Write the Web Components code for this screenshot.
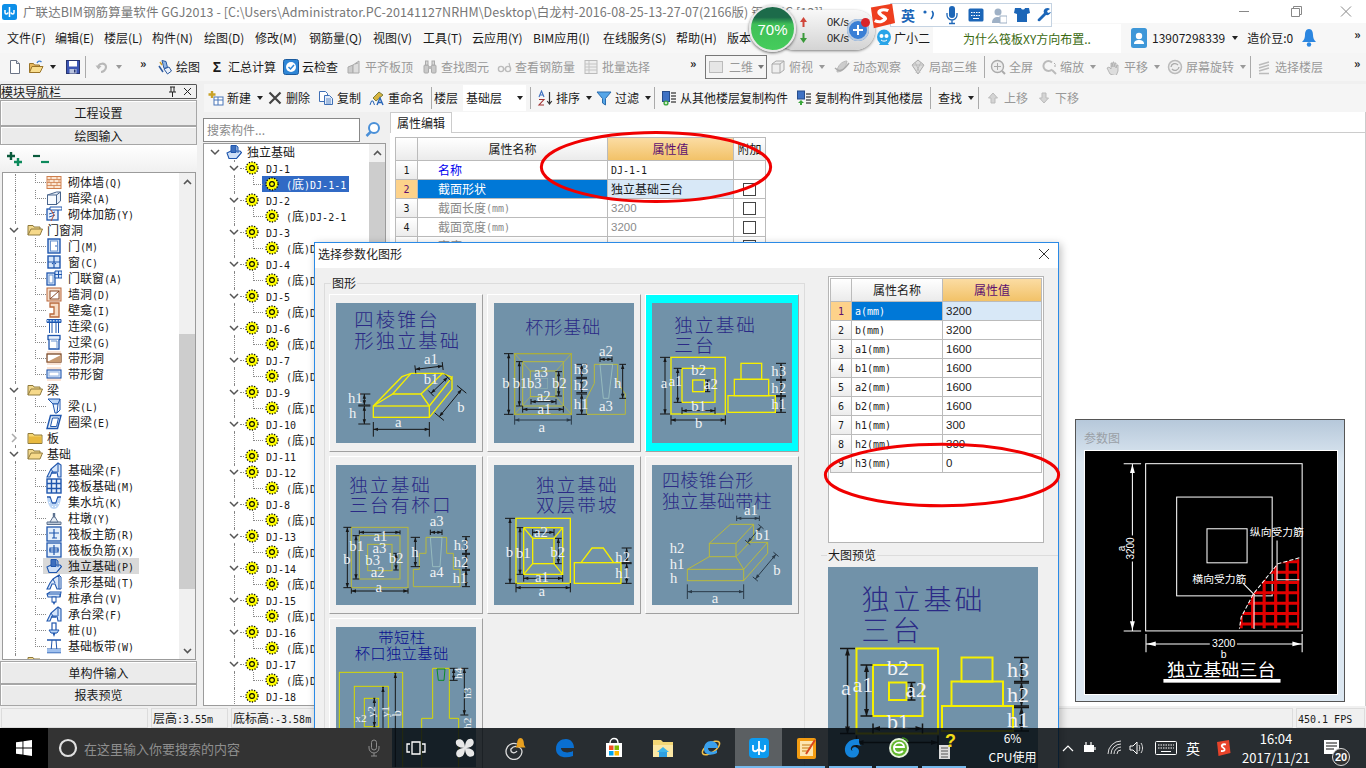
<!DOCTYPE html>
<html>
<head>
<meta charset="utf-8">
<title>GGJ2013</title>
<style>
  html, body { margin: 0; padding: 0; background: #0b1a24; }
  body { font: 12px "Noto Sans CJK SC", "Liberation Sans", sans-serif; color: #1a1a1a; overflow: hidden; }
</style>
</head>
<body>
<gl-app>
  <gl-titlebar></gl-titlebar>
  <gl-menubar></gl-menubar>
  <gl-toolbar set="main" origin="0" end="1366" gap="3"></gl-toolbar>
  <gl-workspace></gl-workspace>
  <gl-statusbar></gl-statusbar>
  <gl-taskbar></gl-taskbar>

  <gl-paramview></gl-paramview>
  <gl-dialog>
    <gl-thumb shape="1"></gl-thumb>
    <gl-thumb shape="2"></gl-thumb>
    <gl-thumb shape="3" selected></gl-thumb>
    <gl-thumb shape="4"></gl-thumb>
    <gl-thumb shape="5"></gl-thumb>
    <gl-thumb shape="6"></gl-thumb>
    <gl-thumb shape="7"></gl-thumb>
    <gl-grid slot="props" set="params" cols="21,91,99"></gl-grid>
    <gl-thumb slot="preview" shape="3" size="210" bare></gl-thumb>
  </gl-dialog>
  <gl-ellipse style="left:539px;top:131px;width:234px;height:72px"></gl-ellipse>
  <gl-ellipse style="left:823px;top:443px;width:238px;height:64px"></gl-ellipse>
  <gl-netwidget></gl-netwidget>
  <gl-imebar></gl-imebar>
</gl-app>

<script>
// helpers shared by the components
const MIX_CSS = `.a{font:10px "DejaVu Sans Mono","Liberation Mono",monospace}`;
const mix = s => s.replace(/[\x20-\x7e]+/g, m => `<span class="a">${m}</span>`);

const B = '#1f56ad';
const ICONS = {
  // toolbar
  new: `<path d="M3.5 1.5h6l3 3v10h-9z" fill="#fff" stroke="#6a7385"/><path d="M9.5 1.5v3h3" fill="#dfe4ee" stroke="#6a7385"/>`,
  open: `<path d="M1.5 13.5v-9h4l1 1.5h5v2" fill="#e6b960" stroke="#9a7428"/><path d="M1.5 13.5l2.5-6h11l-3 6z" fill="#f8dd8e" stroke="#9a7428"/><path d="M9 4c1-2 3-2.500 4.500-1" fill="none" stroke="#3f7fd0" stroke-width="1.300"/>`,
  save: `<rect x="1.500" y="1.500" width="13" height="13" fill="#3c56b5" stroke="#27346f"/><rect x="4" y="2" width="8" height="5.500" fill="#fff"/><rect x="4.500" y="10" width="7" height="4.500" fill="#b9c3de"/><rect x="9" y="10.500" width="1.500" height="3" fill="#27346f"/>`,
  undo: `<path d="M4 9c0-5 8-6 8-1 0 3-3 5-5 5" fill="none" stroke="#b8b8b8" stroke-width="2.200"/><path d="M1.500 6.500l3 4 3-3.500z" fill="#b8b8b8"/>`,
  draw: `<path d="M5 1.500l4 1 1.500 6-3.500 1z" fill="#8fb5e6" stroke="#2c5aa0"/><path d="M7 10l5-2 2.500 4-4 3z" fill="#e9f0fb" stroke="#2c5aa0"/><path d="M2 7l4 6" stroke="#2c5aa0" stroke-width="1.500"/><path d="M3 3l2 3" stroke="#d0a030" stroke-width="1.500"/>`,
  cloudchk: `<rect x="0.500" y="0.500" width="15" height="15" rx="2" fill="#2f86d6" stroke="#1b5a9d"/><circle cx="8" cy="8" r="5" fill="#fff"/><path d="M5.500 8l2 2 3.500-4" fill="none" stroke="#2f86d6" stroke-width="1.500"/>`,
  align: `<path d="M2 14V8l5-2v8z" fill="#ccc" stroke="#aaa"/><path d="M7 14V6l6-4v12z" fill="#ddd" stroke="#aaa"/><path d="M9 5l3-1" stroke="#aaa"/>`,
  binoc: `<rect x="2" y="6" width="4.500" height="8" rx="1" fill="#c9c9c9" stroke="#aaa"/><rect x="9.500" y="6" width="4.500" height="8" rx="1" fill="#c9c9c9" stroke="#aaa"/><rect x="3.500" y="2" width="2.500" height="4" fill="#d8d8d8" stroke="#aaa"/><rect x="10" y="2" width="2.500" height="4" fill="#d8d8d8" stroke="#aaa"/><rect x="6.500" y="7" width="3" height="3" fill="#bbb"/>`,
  glass: `<circle cx="5" cy="10" r="2.600" fill="none" stroke="#bbb" stroke-width="1.400"/><circle cx="12" cy="10" r="2.600" fill="none" stroke="#bbb" stroke-width="1.400"/><path d="M7.500 10h2M14 8l-1-4" stroke="#bbb" stroke-width="1.200"/>`,
  batch: `<rect x="2" y="1.500" width="12" height="13" fill="#eee" stroke="#bbb"/><path d="M2 5h12M2 8h12M2 11h12M6 2v12" stroke="#c4c4c4"/>`,
  box2d: `<rect x="1.500" y="2.500" width="13" height="11" fill="#e6e6e6" stroke="#bbb"/>`,
  cube: `<path d="M2 5l4-3h8v9l-4 3H2z" fill="#eee" stroke="#aaa"/><path d="M2 5h8v9M10 5l4-3" fill="none" stroke="#aaa"/>`,
  orbit: `<path d="M3 13c0-6 5-11 10-11-1 6-4 11-10 11z" fill="#ccc" stroke="#bbb"/><path d="M1 9c5 5 9 2 14-5" fill="none" stroke="#aaa" stroke-width="1.400"/>`,
  cube3: `<path d="M8 1l6 5-6 9-6-9z" fill="#ddd" stroke="#aaa"/><path d="M2 6h12M5 3l5 11M11 3l-5 11" stroke="#bbb"/>`,
  full: `<circle cx="7.500" cy="7.500" r="6" fill="#eee" stroke="#aaa" stroke-width="1.400"/><path d="M4 7.500h7M7.500 4v7" stroke="#aaa"/><path d="M12 12l3 3" stroke="#aaa" stroke-width="2"/>`,
  zoomi: `<path d="M11 3.500a5 5 0 1 0 0 7" fill="none" stroke="#bbb" stroke-width="2"/><path d="M11 11l4 4" stroke="#bbb" stroke-width="2"/><path d="M13 4l1.500 1.500M13 7h2" stroke="#aaa"/>`,
  pan: `<path d="M5 15L2 9l2-1 2 2V4h1v4l1-5h1v5l1-4h1v5l1-3h1v6l-2 5z" fill="#ddd" stroke="#aaa" stroke-width=".8"/>`,
  rot: `<circle cx="8" cy="8" r="6.500" fill="#eee" stroke="#bbb" stroke-width="1.500"/><path d="M4 8a4 4 0 0 1 7-2M12 8a4 4 0 0 1-7 2" fill="none" stroke="#aaa" stroke-width="1.300"/>`,
  sel: `<path d="M3 12l10-3M3 9l10-3M3 6l10-3M3 14.500h10" stroke="#bbb" stroke-width="1.500"/>`,
  // second toolbar
  add: `<rect x="6" y="7" width="9" height="8" fill="#fff" stroke="#4a76b8"/><path d="M6 10h9M10 7v8" stroke="#4a76b8"/><path d="M4 1v7M.5 4.500h7" stroke="#c9a227" stroke-width="2.400"/>`,
  del: `<path d="M2.500 2.500l11 11M13.500 2.500l-11 11" stroke="#444" stroke-width="2.200"/>`,
  copy: `<path d="M1.500 1.500h6l2 2v8h-8z" fill="#fff" stroke="#3f6fb5"/><path d="M6.500 5.500h5l3 3v6h-8z" fill="#e5eefb" stroke="#3f6fb5"/><path d="M8 9h5M8 11h5M8 13h5" stroke="#3f6fb5" stroke-width=".8"/>`,
  rename: `<path d="M4 8l6-6 4 3-7 6z" fill="#d7b43e" stroke="#7d7d3a"/><path d="M1 15l1.500-4h1.500l1.500 4" fill="none" stroke="#2a66b8"/><path d="M8 15l3-7 3 7M9 12.500h4" fill="none" stroke="#2a66b8" stroke-width="1.400"/>`,
  sort: `<path d="M12.500 2v11M10.200 11l2.300 3 2.300-3" fill="none" stroke="#333" stroke-width="1.200"/><path d="M2 7l2.500-6L7 7M3 5h3" fill="none" stroke="#3b6fc0" stroke-width="1.100"/><path d="M2 9.500h5L2 15h5" fill="none" stroke="#a03030" stroke-width="1.100"/>`,
  filter: `<path d="M1 2h14L9.500 8.500V15l-3-2V8.500z" fill="#56a6e8" stroke="#2a6cad"/>`,
  cfrom: `<rect x="1.500" y="1.500" width="7" height="10" fill="#3f72c4" stroke="#274d8c"/><path d="M10 3h5M10 6h5M10 9h5M10 12h5" stroke="#555" stroke-width="1.300"/><circle cx="5" cy="13" r="2.600" fill="#3aa63a"/><path d="M3.800 13h2.400M5 11.800v2.400" stroke="#fff"/>`,
  cto: `<rect x="1.500" y="1" width="7" height="8" fill="#3f72c4" stroke="#274d8c"/><path d="M10 4h5M10 7h5M10 10h5M10 13h5" stroke="#555" stroke-width="1.300"/><path d="M5 10l-3 3h2v2h2v-2h2z" fill="#3aa63a"/>`,
  up: `<path d="M8 3l4.500 5H10v5H6V8H3.500z" fill="#d4d4d4" stroke="#bbb"/>`,
  down: `<path d="M8 13l4.500-5H10V3H6v5H3.500z" fill="#d4d4d4" stroke="#bbb"/>`,
  // tree
  folder: `<path d="M1 3.500h5l1 1.500h8v8.500H1z" fill="#f6d774" stroke="#8f7a3c"/><path d="M2 6.500h12.500v6.500H2z" fill="#e8b93f"/>`,
  folderopen: `<path d="M1 13V3.500h5l1 1.500h6v2" fill="#f2d88d" stroke="#8f7a3c"/><path d="M1 13l3-6h11.500L13 13z" fill="#f6d98a" stroke="#8f7a3c"/>`,
  brick: `<rect x="1" y="2.500" width="14" height="12" fill="#fbe6d3" stroke="#cf7f4c"/><path d="M1 5.500h14M1 8.500h14M1 11.500h14M5 2.500v3M11 2.500v3M8 5.500v3M3 5.500v3M13 5.500v3M5 8.500v3M11 8.500v3M8 11.500v3" stroke="#cf7f4c" stroke-width=".8"/>`,
  darkbeam: `<path d="M1.500 5l9-3h4v9l-4 3.500h-9z" fill="#e7eef8" stroke="#48648c"/><rect x="1.500" y="5" width="9" height="9.500" fill="#f8fbff" stroke="#48648c"/><path d="M10.500 5l4-3" stroke="#48648c"/>`,
  wallbar: `<rect x="1" y="3" width="11" height="11" fill="#e8f0fb" stroke="${B}" stroke-width="1.300"/><path d="M4 1h12v3H4zM3 8l6-2M3 11l6-2" fill="#fff" stroke="${B}"/><path d="M5 4l3 5-3 6" fill="none" stroke="#b54a2e"/>`,
  door: `<rect x="2" y="1" width="12" height="14" fill="#cfe0f7" stroke="${B}" stroke-width="1.400"/><rect x="4.500" y="3" width="7" height="10" fill="#fff" stroke="#6b94d0"/><circle cx="10" cy="8" r=".8" fill="${B}"/>`,
  window: `<rect x="2" y="2" width="12" height="12" fill="#d6e6fa" stroke="${B}" stroke-width="1.400"/><path d="M8 2v12M2 8h12" stroke="${B}" stroke-width="1.200"/><circle cx="6.500" cy="9.500" r=".7" fill="${B}"/><circle cx="9.500" cy="9.500" r=".7" fill="${B}"/>`,
  doorwin: `<rect x="1" y="3" width="8" height="12" fill="#e3eefc" stroke="${B}" stroke-width="1.300"/><rect x="3" y="5" width="4" height="8" fill="#fff" stroke="#6b94d0"/><path d="M9 1h7v7H9z" fill="#d6e6fa" stroke="${B}"/><path d="M12.500 1v7M9 4.500h7" stroke="${B}"/>`,
  wallhole: `<rect x="1" y="2" width="14" height="13" fill="#f7e0cd" stroke="#b9673a"/><rect x="4" y="5" width="9" height="8" fill="#fff" stroke="#8a4a28"/><path d="M4 13l9-8" stroke="#8a4a28"/>`,
  niche: `<path d="M4 1h9v14H4v-3h4V5H4z" fill="#f7dcc6" stroke="#b9673a" stroke-width="1.300"/>`,
  linkbeam: `<path d="M1 1.500h14v3H1z" fill="#2f6fc8" stroke="${B}"/><path d="M3.500 4.500V15M12.500 4.500V15M6 4.500V15M10 4.500V15" stroke="${B}"/><path d="M1 2.800h14" stroke="#fff" stroke-dasharray="1.500 1.500"/>`,
  lintel: `<rect x="2" y="1.500" width="12" height="4" fill="#eaf1fb" stroke="${B}" stroke-width="1.300"/><path d="M3 5.500V15h10V5.500" fill="#fff" stroke="${B}" stroke-width="1.300"/><path d="M5 7h6v8" fill="none" stroke="#6b94d0"/>`,
  bandhole: `<rect x="1" y="1" width="14" height="14" fill="#fae3d4"/><rect x="1" y="4" width="14" height="8" fill="#fff" stroke="#7b4a28" stroke-width="1.300"/><path d="M1 12l14-7v7z" fill="#c79a72"/>`,
  bandwin: `<rect x="1" y="1" width="14" height="14" fill="#fae3d4"/><rect x="1" y="4" width="14" height="8" fill="#dbe8fb" stroke="${B}" stroke-width="1.100"/><rect x="3" y="6" width="10" height="4" fill="#fff" stroke="#8fb0e0"/>`,
  beam: `<path d="M2 1h12l-2 5H7z" fill="#bcd6f6" stroke="${B}"/><path d="M7 6h5l-1 9H9zM2 1l5 5" fill="#eaf3fd" stroke="${B}"/><path d="M14 1v11l-3 3" fill="none" stroke="${B}"/>`,
  ringbeam: `<path d="M4.500 1.500H15l-3.500 13H1z" fill="#e5effb" stroke="${B}" stroke-width="1.400"/><path d="M6.500 4h6l-2 8.500H4.500z" fill="#fff" stroke="${B}"/>`,
  fbeam: `<path d="M1 15l4-8 7-6 3 2v12h-3l-1-5H6l-2 5z" fill="#d6e6fa" stroke="${B}" stroke-width="1.100"/><path d="M5 7l2 3M12 1v9" stroke="${B}"/><path d="M5.500 11h5" stroke="${B}" stroke-width="1.500"/>`,
  raft: `<rect x="1" y="1" width="14" height="14" fill="#e5effb" stroke="${B}" stroke-width="1.400"/><path d="M1 5.500h14M1 10.500h14M5.500 1v14M10.500 1v14" stroke="${B}" stroke-width="1.400"/>`,
  pit: `<path d="M1 3h3l2 6h4l2-6h3" fill="none" stroke="${B}" stroke-width="1.500"/><path d="M1 4c1 8 4 11 7 11s6-3 7-11l-3 0-2 6H6L4 4z" fill="#bcd6f6"/><path d="M3 8l1 1M6 12l1 1M9 12l1 1M12 9l1 1" stroke="#fff"/>`,
  pier: `<path d="M1 12h14v2.500H1z" fill="#bcc8d8" stroke="#5d7290"/><path d="M4 12l3-5h2l3 5z" fill="#e5ebf3" stroke="#5d7290"/><rect x="6.800" y="3" width="2.400" height="4" fill="#5d7290"/>`,
  raftbar: `<rect x="1" y="1" width="14" height="14" fill="#e5effb" stroke="${B}" stroke-width="1.300"/><path d="M3 7h10M8 3v9M6 12h5" fill="none" stroke="${B}" stroke-width="1.200"/>`,
  raftneg: `<rect x="1" y="1" width="14" height="14" fill="#e5effb" stroke="${B}" stroke-width="1.300"/><path d="M3 8h10M8 3v10M4 6h8v4H4z" fill="none" stroke="${B}" stroke-width="1.200"/>`,
  footing: `<path d="M1 9l4-2h9l1.500 1.500-5 6H3z" fill="#cfe0f7" stroke="${B}" stroke-width="1.100"/><path d="M5 1.500h5v7H5z" fill="#3d6fbe" stroke="${B}"/><path d="M10 1.500l2 1.500v6" fill="#8fb3e6" stroke="${B}"/><path d="M3 14.500h7.500l5-6" fill="none" stroke="${B}"/>`,
  strip: `<path d="M1 15l3-6 3-4 6-4v14h-2l-2-5H6l-2 5z" fill="#dbe8fb" stroke="${B}" stroke-width="1.100"/><path d="M7 5l2 4M13 1l2 2v12h-2" fill="none" stroke="${B}"/>`,
  pilecap: `<path d="M1 4l3-2h11l-1 5H2z" fill="#d6e6fa" stroke="${B}" stroke-width="1.100"/><path d="M1 4h13v3" fill="none" stroke="${B}"/><rect x="6" y="7" width="4" height="5" fill="#fff" stroke="${B}"/><path d="M6.500 12h3L8 15z" fill="${B}"/>`,
  pile: `<rect x="6" y="1" width="4" height="8" fill="#fff" stroke="${B}" stroke-width="1.200"/><path d="M3 8h10l-2 3H5z" fill="#bcd6f6" stroke="${B}"/><path d="M6.500 11h3L8 15z" fill="${B}"/>`,
  slabband: `<path d="M1 2h14M1 14.500h14" stroke="${B}" stroke-width="1.500"/><path d="M6 2l-1 12M10 2l1 12M1 11h14" stroke="${B}"/><rect x="1" y="11" width="14" height="3.500" fill="#9fc0ee"/>`,
  gear: `<circle cx="8" cy="8" r="6" fill="#ffff00" stroke="#000" stroke-width="1.300" stroke-dasharray="1.200 1.500"/><circle cx="8" cy="8" r="2.400" fill="#ffff00" stroke="#000" stroke-width="1.100"/>`,
};
const icon = (n, s = 16) => `<svg width="${s}" height="${s}" viewBox="0 0 16 16" style="display:block;flex:none">${ICONS[n] || ''}</svg>`;

const TOOLBARS = {
  main: [
    { x: 7, i: 'new' }, { x: 28, i: 'open', c: 1 }, { x: 65, i: 'save' }, { x: 85, k: 'sep' },
    { x: 94, i: 'undo', c: 1, g: 1 }, { x: 140, k: 'more' },
    { x: 157, i: 'draw', t: '绘图' }, { x: 209, k: 'sigma', t: '汇总计算' }, { x: 283, i: 'cloudchk', t: '云检查' },
    { x: 346, i: 'align', t: '平齐板顶', g: 1 }, { x: 422, i: 'binoc', t: '查找图元', g: 1 },
    { x: 496, i: 'glass', t: '查看钢筋量', g: 1 }, { x: 583, i: 'batch', t: '批量选择', g: 1 }, { x: 690, k: 'more' },
    { x: 705, k: 'combo2d', t: '二维' },
    { x: 770, i: 'cube', t: '俯视', g: 1, c: 1 }, { x: 834, i: 'orbit', t: '动态观察', g: 1 }, { x: 910, i: 'cube3', t: '局部三维', g: 1 },
    { x: 984, k: 'sep' }, { x: 990, i: 'full', t: '全屏', g: 1 }, { x: 1041, i: 'zoomi', t: '缩放', g: 1, c: 1 },
    { x: 1105, i: 'pan', t: '平移', g: 1, c: 1 }, { x: 1167, i: 'rot', t: '屏幕旋转', g: 1, c: 1 }, { x: 1250, k: 'sep' },
    { x: 1256, i: 'sel', t: '选择楼层', g: 1 }, { x: 1354, k: 'more' },
  ],
  second: [
    { x: 208, i: 'add', t: '新建', c: 1 }, { x: 267, i: 'del', t: '删除' }, { x: 318, i: 'copy', t: '复制' },
    { x: 369, i: 'rename', t: '重命名' }, { x: 431, k: 'sep' }, { x: 434, k: 'label', t: '楼层' },
    { x: 463, k: 'combo', t: '基础层' }, { x: 530, k: 'sep' },
    { x: 537, i: 'sort', t: '排序', c: 1 }, { x: 596, i: 'filter', t: '过滤', c: 1 }, { x: 654, k: 'sep' },
    { x: 661, i: 'cfrom', t: '从其他楼层复制构件' }, { x: 796, i: 'cto', t: '复制构件到其他楼层' }, { x: 930, k: 'sep' },
    { x: 938, k: 'label', t: '查找', c: 1 }, { x: 978, k: 'sep' },
    { x: 985, i: 'up', t: '上移', g: 1 }, { x: 1036, i: 'down', t: '下移', g: 1 },
  ],
};

const NAV_ROWS = [
  ['brick', '砌体墙(Q)'], ['darkbeam', '暗梁(A)'], ['wallbar', '砌体加筋(Y)'],
  ['F', '门窗洞', 1], ['door', '门(M)'], ['window', '窗(C)'], ['doorwin', '门联窗(A)'], ['wallhole', '墙洞(D)'],
  ['niche', '壁龛(I)'], ['linkbeam', '连梁(G)'], ['lintel', '过梁(G)'], ['bandhole', '带形洞'], ['bandwin', '带形窗'],
  ['F', '梁', 1], ['beam', '梁(L)'], ['ringbeam', '圈梁(E)'],
  ['F', '板', 0],
  ['F', '基础', 1], ['fbeam', '基础梁(F)'], ['raft', '筏板基础(M)'], ['pit', '集水坑(K)'], ['pier', '柱墩(Y)'],
  ['raftbar', '筏板主筋(R)'], ['raftneg', '筏板负筋(X)'], ['footing', '独立基础(P)', 0, 1], ['strip', '条形基础(T)'],
  ['pilecap', '桩承台(V)'], ['fbeam', '承台梁(F)'], ['pile', '桩(U)'], ['slabband', '基础板带(W)'],
];
const COMP_ROWS = ['1', '2', '3', '4', '5', '6', '7', '9', '10', '11', '12', '8', '13', '14', '15', '16', '17', '18'];

const GRIDS = {
  props: {
    head: ['', '属性名称', '属性值', '附加'],
    selected: 1,
    rows: [
      ['名称', 'DJ-1-1', '', 'link'],
      ['截面形状', '独立基础三台', 'box', ''],
      ['截面长度(mm)', '3200', 'box', 'gray'],
      ['截面宽度(mm)', '3200', 'box', 'gray'],
      ['高度(mm)', '900', 'box', 'gray'],
    ],
  },
  params: {
    head: ['', '属性名称', '属性值'],
    selected: 0,
    rows: [['a(mm)', '3200'], ['b(mm)', '3200'], ['a1(mm)', '1600'], ['b1(mm)', '1600'], ['a2(mm)', '1600'],
      ['b2(mm)', '1600'], ['h1(mm)', '300'], ['h2(mm)', '300'], ['h3(mm)', '0']],
  },
};

// drawing helpers for the shape thumbnails, in 3x reference units
const YEL = '#f6ef00', OLV = '#b9ba3c', INK = '#2b2a86';
const P = (pts, c = YEL, w = 4, close) => `<${close ? 'polygon' : 'polyline'} points="${pts}" fill="none" stroke="${c}" stroke-width="${w}"/>`;
const R = (x1, y1, x2, y2, c = YEL, w = 4) => `<rect x="${x1}" y="${y1}" width="${x2 - x1}" height="${y2 - y1}" fill="none" stroke="${c}" stroke-width="${w}"/>`;
const T = (x, y, s, size = 44, rot) => `<text x="${x}" y="${y}" font-family="Liberation Serif" font-size="${size}" fill="#f0f2f5" text-anchor="middle"${rot ? ` transform="rotate(-90 ${x} ${y})"` : ''}>${s}</text>`;
const H = (x, y, s, size = 58, ls = 6, c = INK) => `<text x="${x}" y="${y}" font-family="Noto Sans CJK SC" font-weight="300" font-size="${size}" letter-spacing="${ls}" fill="${c}">${s}</text>`;
const D = (x1, y1, x2, y2, tick = 14, c = '#161616') => {
  const len = Math.hypot(x2 - x1, y2 - y1), ux = (x2 - x1) / len, uy = (y2 - y1) / len, nx = -uy, ny = ux;
  const head = (x, y, d) => `<polygon points="${x},${y} ${x + d * ux * 14 + nx * 5},${y + d * uy * 14 + ny * 5} ${x + d * ux * 14 - nx * 5},${y + d * uy * 14 - ny * 5}" fill="${c}"/>`;
  const t = (x, y) => `<line x1="${x - nx * tick}" y1="${y - ny * tick}" x2="${x + nx * tick}" y2="${y + ny * tick}" stroke="${c}" stroke-width="3"/>`;
  return `<line x1="${x1}" y1="${y1}" x2="${x2}" y2="${y2}" stroke="${c}" stroke-width="3"/>` + head(x1, y1, 1) + head(x2, y2, -1) + t(x1, y1) + t(x2, y2);
};

const SHAPES = {
  1: { o: [60, 99], s:
    H(115, 172, '四棱锥台') + H(115, 233, '形独立基础') +
    R(172, 408, 340, 442) + P('340,408 408,322 408,358 340,442') + P('172,408 258,320 285,310 380,310 408,322') +
    P('172,408 230,372 315,372 340,408') + P('230,372 285,310') + P('315,372 380,310') +
    D(172, 478, 340, 478, 22) + D(145, 372, 145, 405, 18) + D(145, 408, 145, 462, 18) +
    D(298, 298, 380, 288, 12) + D(395, 322, 345, 370, 12) + D(437, 358, 370, 440, 18) +
    T(247, 470, 'a') + T(118, 398, 'h1') + T(110, 445, 'h') + T(345, 282, 'a1') + T(345, 342, 'b1') + T(435, 425, 'b') },
  2: { o: [534, 99], s:
    H(628, 192, '杯形基础', 54, 3) +
    R(596, 251, 766, 433, '#a9ad3e') + R(620, 275, 742, 408, OLV, 3) + R(643, 303, 720, 380, OLV, 3) + R(660, 325, 695, 355, '#8fb0b0', 2) +
    P('596,251 643,303', OLV, 2) + P('766,251 720,303', OLV, 2) + P('596,433 643,380', OLV, 2) + P('766,433 720,380', OLV, 2) +
    P('835,283 905,283 905,340 928,372 928,433 812,433 812,385 835,340', OLV, 3, 1) + P('852,283 890,283 878,385 862,385', '#a9cfc8', 2, 1) +
    D(578, 251, 578, 433) + D(610, 275, 610, 408, 10) + D(728, 305, 728, 378, 10) + D(620, 418, 742, 418, 10) + D(596, 450, 766, 450, 14, '#2a3a48') + D(645, 395, 720, 395, 8) +
    D(797, 283, 797, 322, 16) + D(797, 326, 797, 368, 16) + D(797, 372, 797, 433, 16) + D(920, 283, 920, 385, 10) + D(852, 268, 888, 268, 8) +
    T(570, 355, 'b') + T(612, 355, 'b1') + T(655, 355, 'b3') + T(730, 353, 'b2') + T(675, 320, 'a3') + T(683, 392, 'a2') + T(685, 432, 'a1') + T(677, 485, 'a') +
    T(795, 313, 'h3') + T(795, 360, 'h2') + T(795, 418, 'h1') + T(905, 355, 'h') + T(870, 258, 'a2') + T(870, 423, 'a3') },
  3: { o: [1008, 99], s:
    H(1075, 185, '独立基础', 56, 6) + H(1075, 247, '三台', 56, 6) +
    R(1065, 262, 1228, 432) + R(1098, 295, 1197, 397) + R(1130, 330, 1165, 365) +
    R(1275, 280, 1337, 328) + R(1255, 328, 1358, 377) + R(1236, 377, 1378, 427) +
    D(1047, 262, 1047, 432, 15) + D(1085, 295, 1085, 397, 12) + D(1098, 422, 1197, 422, 10) + D(1065, 450, 1228, 450, 14) + D(1175, 330, 1175, 365, 8) +
    D(1395, 280, 1395, 328, 15) + D(1395, 331, 1395, 377, 15) + D(1395, 380, 1395, 427, 15) +
    T(1044, 355, 'a') + T(1078, 348, 'a1') + T(1148, 315, 'b2') + T(1185, 358, 'a2') + T(1148, 422, 'b1') + T(1148, 475, 'b') +
    T(1388, 318, 'h3') + T(1388, 368, 'h2') + T(1388, 418, 'h1') },
  4: { o: [60, 30], s:
    H(100, 112, '独立基础', 56, 6) + H(100, 172, '三台有杯口', 56, 6) +
    R(106, 217, 276, 398, OLV, 3) + R(130, 242, 252, 372, OLV, 3) + R(155, 268, 228, 347, OLV, 3) +
    P('330,247 392,247 392,295 412,295 412,343 432,343 432,395 292,395 292,343 310,343 310,295 330,295', OLV, 3, 1) + P('343,247 378,247 372,335 350,335', '#a9cfc8', 2, 1) +
    D(94, 217, 94, 398, 12) + D(120, 242, 120, 372, 10) + D(130, 232, 252, 232, 6) + D(106, 408, 276, 408, 8) + D(343, 232, 378, 232, 8) + D(298, 247, 298, 335, 14) +
    D(450, 245, 450, 295, 12) + D(450, 298, 450, 343, 12) + D(450, 346, 450, 395, 12) + D(240, 295, 240, 345, 8) +
    T(93, 328, 'b') + T(122, 288, 'b1') + T(193, 258, 'a1') + T(190, 295, 'a3') + T(170, 330, 'b3') + T(240, 325, 'b2') + T(185, 365, 'a2') + T(188, 412, 'a') +
    T(362, 212, 'a3') + T(297, 305, 'h') + T(362, 367, 'a4') + T(435, 285, 'h3') + T(435, 335, 'h2') + T(432, 385, 'h1') },
  5: { o: [534, 30], s:
    H(660, 112, '独立基础', 56, 6) + H(660, 172, '双层带坡', 56, 6) +
    R(600, 190, 763, 385) + R(623, 218, 740, 358) + R(650, 250, 714, 326) +
    P('623,218 650,250') + P('740,218 714,250') + P('623,358 650,326') + P('740,358 714,326') +
    R(775, 323, 915, 385) + P('795,323 828,279 862,279 893,323') +
    D(582, 190, 582, 385, 15) + D(612, 218, 612, 358, 10) + D(650, 232, 714, 232, 10) + D(623, 370, 740, 370, 10) + D(600, 398, 763, 398, 14) + D(727, 250, 727, 326, 10) +
    D(932, 279, 932, 323, 15) + D(932, 326, 932, 385, 15) +
    T(580, 305, 'b') + T(622, 310, 'b1') + T(675, 245, 'a2') + T(725, 305, 'b2') + T(678, 380, 'a1') + T(677, 422, 'a') + T(920, 320, 'h2') + T(920, 370, 'h1') },
  6: { o: [1008, 30], s:
    H(1038, 95, '四棱锥台形', 54, 1) + H(1038, 158, '独立基础带柱', 54, 1) +
    R(1114, 343, 1283, 377, OLV, 3) + P('1283,343 1355,262 1355,295 1283,377', OLV, 3) + P('1114,343 1180,305', OLV, 3) +
    R(1180, 265, 1260, 305, OLV, 3) + P('1180,265 1243,208 1313,208 1260,265', OLV, 3) + P('1313,208 1313,250 1260,305', OLV, 3) + P('1260,305 1283,343', OLV, 3) + P('1290,262 1355,262', OLV, 3) +
    D(1114, 410, 1283, 410, 22, '#2a3a48') + D(1262, 190, 1330, 190, 8, '#2a3a48') + D(1380, 298, 1318, 372, 10, '#2a3a48') + D(1335, 215, 1295, 262, 10, '#2a3a48') +
    T(1305, 180, 'a1') + T(1340, 255, 'b1') + T(1083, 295, 'h2') + T(1083, 342, 'h1') + T(1073, 385, 'h') + T(1383, 360, 'b') + T(1197, 445, 'a') },
  7: { o: [60, 516], s:
    H(187, 565, '带短柱', 46, 1, '#0a1090') + H(116, 612, '杯口独立基础', 46, 1, '#0a1090') +
    R(70, 652, 260, 960, '#d8d800', 3) + R(115, 694, 217, 930, '#d8d800', 3) + R(145, 730, 188, 815, '#d8d800', 3) +
    P('350,640 400,640 400,790 428,790 428,960', '#d8d800', 3) + P('350,640 350,790 317,790 317,960', '#d8d800', 3) +
    P('363,642 387,642 384,676 367,676', '#0a8a2a', 3, 1) +
    D(238, 655, 238, 960, 3) + D(201, 697, 201, 930, 3) + D(175, 730, 175, 815, 3) + D(445, 640, 445, 780, 12) + D(413, 640, 413, 676, 12) +
    T(135, 802, 'x2', 34) + T(176, 770, 'y2', 34, 1) + T(218, 770, 'y1', 34, 1) + T(254, 775, 'b', 36, 1) + T(437, 655, 'h4', 34, 1) + T(466, 715, 'h3', 34, 1) + T(466, 805, 'h2', 34, 1) },
};

class GlApp extends HTMLElement {
  constructor() {
    super();
    this.attachShadow({ mode: 'open' });
    this.shadowRoot.innerHTML = `
      <style>
        :host { display: grid; grid-template-rows: 23px 30px 31px 624px 20px 40px; position: relative; width: 1366px; height: 768px; overflow: hidden; background: #f0f0f0; }
      </style>
      <slot></slot>`;
  }
}

class GlTitlebar extends HTMLElement {
  constructor() {
    super();
    this.attachShadow({ mode: 'open' });
    this.shadowRoot.innerHTML = `
      <style>
        :host { display: flex; align-items: center; background: #fff; color: #777; font-size: 12.5px; padding-left: 2px; white-space: nowrap; overflow: hidden; }
        .logo { flex: none; margin-right: 6px; }
        .text { flex: 1; overflow: hidden; letter-spacing: .08px; }
        .ctl { flex: none; display: flex; margin-right: -6px; }
        .ctl svg { display: block; width: 51px; height: 23px; }
      </style>
      <svg class="logo" width="15" height="16" viewBox="0 0 15 16"><rect width="15" height="16" rx="2.500" fill="#0d8fe8"/><path d="M3 6v2.500c0 2 2.500 2 3 0M12 6v2.500c0 2-2.500 2-3 0M7.500 3v10" fill="none" stroke="#fff" stroke-width="1.500"/></svg>
      <span class="text">广联达BIM钢筋算量软件 GGJ2013 - [C:\\Users\\Administrator.PC-20141127NRHM\\Desktop\\白龙村-2016-08-25-13-27-07(2166版) 钢筋GC [13]]</span>
      <div class="ctl">
        <svg viewBox="0 0 51 23"><path d="M20 11.500h10" stroke="#888"/></svg>
        <svg viewBox="0 0 51 23"><path d="M21.500 8.500h8v8h-8zM23.500 8.500v-2h8v8h-2" fill="none" stroke="#888"/></svg>
        <svg viewBox="0 0 51 23"><path d="M20 6.500l10 10M30 6.500l-10 10" stroke="#888"/></svg>
      </div>`;
  }
}

class GlMenubar extends HTMLElement {
  constructor() {
    super();
    this.attachShadow({ mode: 'open' });
    const items = [['文件(F)', 48], ['编辑(E)', 49], ['楼层(L)', 48], ['构件(N)', 52], ['绘图(D)', 51], ['修改(M)', 54], ['钢筋量(Q)', 64],
      ['视图(V)', 50], ['工具(T)', 49], ['云应用(Y)', 61], ['BIM应用(I)', 70], ['在线服务(S)', 73], ['帮助(H)', 51], ['版本', 149]];
    this.shadowRoot.innerHTML = `
      <style>
        :host { display: flex; align-items: center; background: #f7f7f7; padding-left: 7px; white-space: nowrap; line-height: 18px; }
        span { flex: none; }
        .me { display: flex; align-items: center; gap: 2px; width: 57px; flex: none; }
        .hint { flex: none; background: #fff; color: #3a6a10; height: 29px; line-height: 29px; width: 158px; padding-left: 30px; }
        .user { display: flex; align-items: center; margin-left: 10px; }
        .caret { width: 0; height: 0; border: 3px solid transparent; border-top: 4px solid #222; border-bottom: 0; margin: 0 9px 0 7px; }
        .more { margin-left: 38px; font-weight: 700; margin-top: -8px; }
      </style>
      ${items.map(([t, w]) => `<span style="width:${w}px">${t}</span>`).join('')}
      <div class="me">
        <svg width="16" height="18" viewBox="0 0 16 18"><ellipse cx="8" cy="8" rx="7" ry="7.500" fill="#29a4e8"/><circle cx="5.500" cy="7" r="2" fill="#fff"/><circle cx="10.500" cy="7" r="2" fill="#fff"/><path d="M3 16l2-3h6l2 3" fill="#29a4e8"/><path d="M5 11c2 1.500 4 1.500 6 0" fill="none" stroke="#fff"/></svg>
        <span>广小二</span>
      </div>
      <span class="hint">为什么筏板XY方向布置..</span>
      <div class="user">
        <svg width="16" height="20" viewBox="0 0 16 20" style="margin-right:5px"><rect width="16" height="20" rx="2.500" fill="#3e97d8"/><circle cx="8" cy="8" r="3.200" fill="#fff"/><path d="M3 16c0-3 2-4 5-4s5 1 5 4z" fill="#fff"/></svg>
        <span>13907298339</span><i class="caret"></i><span>造价豆:0</span>
        <svg width="14" height="20" viewBox="0 0 14 20" style="margin-left:9px"><path d="M7 1c3 0 4 3 4 6 0 3 1 5 3 7H0c2-2 3-4 3-7 0-3 1-6 4-6z" fill="#2b86e0"/><circle cx="7" cy="16.500" r="2.200" fill="#2b86e0"/></svg>
      </div>
      <span class="more">»</span>`;
  }
}

class GlToolbar extends HTMLElement {
  connectedCallback() {
    if (this.shadowRoot) return;
    this.attachShadow({ mode: 'open' });
    const tokens = TOOLBARS[this.getAttribute('set')];
    const origin = +this.getAttribute('origin');
    const end = +this.getAttribute('end');
    const gap = +(this.getAttribute('gap') || 0);
    const item = (tok, w) => {
      const cls = tok.g ? 'item gray' : 'item';
      const caret = tok.c ? '<i class="caret"></i>' : '';
      if (tok.k === 'sep') return `<div class="slot" style="width:${w}px"><i class="sep"></i></div>`;
      if (tok.k === 'more') return `<div class="slot more" style="width:${w}px">»</div>`;
      if (tok.k === 'label') return `<div class="${cls}" style="width:${w}px"><span>${tok.t}</span>${caret}</div>`;
      if (tok.k === 'sigma') return `<div class="${cls}" style="width:${w}px"><b class="sigma">Σ</b><span>${tok.t}</span></div>`;
      if (tok.k === 'combo') return `<div class="slot" style="width:${w}px"><div class="combo"><span>${tok.t}</span><i class="caret"></i></div></div>`;
      if (tok.k === 'combo2d') return `<div class="slot" style="width:${w}px"><div class="combo2d">${icon('box2d', 16)}<span>${tok.t}</span><i class="caret"></i></div></div>`;
      return `<div class="${cls}" style="width:${w}px">${icon(tok.i)}${tok.t ? `<span>${tok.t}</span>` : ''}${caret}</div>`;
    };
    const html = tokens.map((tok, n) => item(tok, (n + 1 < tokens.length ? tokens[n + 1].x : end) - tok.x)).join('');
    this.shadowRoot.innerHTML = `
      <style>
        :host { display: flex; align-items: flex-start; background: #f5f5f5; white-space: nowrap; padding-left: ${tokens[0].x - origin}px; padding-top: 1px; margin-bottom: ${gap}px; overflow: hidden; line-height: 18px; box-sizing: border-box; }
        .item, .slot { flex: none; display: flex; align-items: center; gap: 3px; height: 26px; box-sizing: border-box; }
        .gray { color: #999; }
        .sep { display: block; width: 1px; height: 22px; background: #aaa; }
        .more { font-weight: 700; align-items: flex-start; }
        .sigma { width: 16px; text-align: center; font: 700 14px "Liberation Sans", sans-serif; }
        .caret { width: 0; height: 0; border: 3px solid transparent; border-top: 4px solid #222; border-bottom: 0; margin-left: 3px; }
        .gray .caret { border-top-color: #999; }
        .combo { display: flex; align-items: center; justify-content: space-between; width: 63px; height: 26px; background: #fff; padding: 0 3px; box-sizing: border-box; }
        .combo2d { display: flex; align-items: center; gap: 5px; width: 62px; height: 24px; border: 1px solid #777; box-sizing: border-box; color: #999; padding-left: 2px; }
        .combo2d .caret { border-top-color: #777; margin-left: 0; }
      </style>${html}`;
  }
}

class GlWorkspace extends HTMLElement {
  constructor() {
    super();
    this.attachShadow({ mode: 'open' });
    this.shadowRoot.innerHTML = `
      <style>
        :host { display: grid; grid-template-columns: 197px 1fr; column-gap: 7px; min-height: 0; }
        .editor { display: grid; grid-template-rows: 28px 1fr; min-width: 0; min-height: 0; }
        .body { display: grid; grid-template-columns: 182px 1fr; column-gap: 4px; min-height: 0; }
      </style>
      <gl-nav></gl-nav>
      <div class="editor">
        <gl-toolbar set="second" origin="204" end="1160"></gl-toolbar>
        <div class="body">
          <gl-comptree></gl-comptree>
          <gl-propeditor></gl-propeditor>
        </div>
      </div>`;
  }
}

class GlScrollbar extends HTMLElement {
  connectedCallback() {
    if (this.shadowRoot) return;
    this.attachShadow({ mode: 'open' });
    this.shadowRoot.innerHTML = `
      <style>
        :host { display: flex; flex-direction: column; flex: none; width: 16px; background: #f0f0f0; overflow: hidden; }
        .btn { flex: none; height: 17px; display: flex; align-items: center; justify-content: center; }
        .track { flex: 1; min-height: 0; }
        .thumb { background: #cdcdcd; margin-top: ${this.getAttribute('top')}px; height: ${this.getAttribute('size')}px; }
      </style>
      <div class="btn"><svg width="9" height="6" viewBox="0 0 9 6"><path d="M1 5l3.500-3.500L8 5" fill="none" stroke="#555" stroke-width="1.600"/></svg></div>
      <div class="track"><div class="thumb"></div></div>
      <div class="btn"><svg width="9" height="6" viewBox="0 0 9 6"><path d="M1 1l3.500 3.500L8 1" fill="none" stroke="#555" stroke-width="1.600"/></svg></div>`;
  }
}

const CHEV_OPEN = `<svg width="12" height="12" viewBox="0 0 12 12" style="display:block"><path d="M2 4l4 4 4-4" fill="none" stroke="#555" stroke-width="1.500"/></svg>`;
const CHEV_SHUT = `<svg width="12" height="12" viewBox="0 0 12 12" style="display:block"><path d="M4 2l4 4-4 4" fill="none" stroke="#aaa" stroke-width="1.500"/></svg>`;

class GlNav extends HTMLElement {
  constructor() {
    super();
    this.attachShadow({ mode: 'open' });
    const rows = NAV_ROWS.map(([ic, text, open, active]) => {
      if (ic === 'F') {
        return `<div class="row folder"><span class="tw">${open ? CHEV_OPEN : CHEV_SHUT}</span>${icon(open ? 'folderopen' : 'folder')}<span class="lb">${text}</span></div>`;
      }
      return `<div class="row child"><span class="wrap${active ? ' on' : ''}">${icon(ic)}<span class="lb">${mix(text)}</span></span></div>`;
    }).join('');
    this.shadowRoot.innerHTML = `
      <style>
        ${MIX_CSS}
        :host { display: flex; flex-direction: column; min-height: 0; overflow: hidden; }
        .head { flex: none; height: 15px; display: flex; align-items: center; border: 1px solid #555; border-radius: 1px; line-height: 14px; background: #f0f0f0; box-sizing: border-box; }
        .head span { flex: 1; }
        .head svg { display: block; margin-right: 5px; }
        .tab { flex: none; display: flex; align-items: center; justify-content: center; box-sizing: border-box; background: #ebebeb; border: 1px solid #a6a6a6; box-shadow: inset 1px 1px 0 #fff; line-height: 16px; }
        .tools { flex: none; height: 27px; display: flex; align-items: center; gap: 6px; padding-left: 6px; background: linear-gradient(#fff, #f0f0f0); }
        .box { flex: 1; min-height: 0; display: flex; margin: 0 1px 0 2px; border: 1px solid #9b9b9b; background: #fff; overflow: hidden; }
        .list { flex: 1; min-width: 0; overflow: hidden; padding-top: 1px; }
        .row { position: relative; height: 16px; display: flex; align-items: center; line-height: 16px; white-space: nowrap; }
        .row::before { content: ""; position: absolute; left: 12px; top: 0; bottom: 0; border-left: 1px dotted #888; }
        .folder { padding-left: 5px; }
        .folder .tw { width: 12px; margin-right: 7px; position: relative; background: #fff; }
        .folder .lb { margin-left: 4px; }
        .child { padding-left: 40px; }
        .child::after { content: ""; position: absolute; left: 32px; top: 0; height: 8px; width: 10px; border-left: 1px dotted #888; border-bottom: 1px dotted #888; }
        .wrap { display: flex; align-items: center; height: 16px; padding-left: 3px; position: relative; z-index: 1; }
        .wrap .lb { margin-left: 6px; padding-right: 0; }
        .wrap.on { background: #d9d9d9; width: 93px; }
      </style>
      <div class="head"><span>模块导航栏</span>
        <svg width="11" height="11" viewBox="0 0 11 11"><path d="M3 1h5M4 1v5M7 1v5M2 6h7M5.500 6v5" stroke="#222" fill="none"/></svg>
        <svg width="9" height="9" viewBox="0 0 9 9" style="margin-right:4px"><path d="M1 1l7 7M8 1l-7 7" stroke="#222"/></svg>
      </div>
      <div class="tab" style="height:26px;margin-top:1px">工程设置</div>
      <div class="tab" style="height:19px">绘图输入</div>
      <div class="tools">
        <svg width="18" height="16" viewBox="0 0 18 16"><path d="M5 1v8M1 5h8" stroke="#0a5a3c" stroke-width="2.400"/><path d="M12 7v8M8 11h8" stroke="#0d8a5c" stroke-width="2.400"/></svg>
        <svg width="18" height="16" viewBox="0 0 18 16" style="margin-left:2px"><path d="M1 5h7" stroke="#0a5a3c" stroke-width="2.200"/><path d="M9 11h8" stroke="#0d8a5c" stroke-width="2.200"/></svg>
      </div>
      <div class="box">
        <div class="list">${rows}<div class="row folder"><span class="tw">${CHEV_OPEN}</span>${icon('folderopen')}</div></div>
        <gl-scrollbar top="144" size="255"></gl-scrollbar>
      </div>
      <div class="tab" style="height:23px;margin-top:1px">单构件输入</div>
      <div class="tab" style="height:22px;margin-bottom:2px">报表预览</div>`;
  }
}

class GlCompTree extends HTMLElement {
  constructor() {
    super();
    this.attachShadow({ mode: 'open' });
    const rows = COMP_ROWS.map((n, idx) => {
      const parent = `<div class="row l1"><span class="tw">${n === '18' || n === '11' ? '' : CHEV_OPEN}</span>${icon('gear')}<span class="lb">${mix('DJ-' + n)}</span></div>`;
      if (n === '18' || n === '11') return parent;
      const sel = idx === 0;
      return parent + `<div class="row l2"><span class="wrap${sel ? ' on' : ''}">${icon('gear')}<span class="lb">${mix(`(底)DJ-${n}-1`)}</span></span></div>`;
    }).join('');
    this.shadowRoot.innerHTML = `
      <style>
        ${MIX_CSS}
        :host { display: flex; flex-direction: column; min-height: 0; overflow: hidden; margin-left: -1px; }
        .search { flex: none; display: flex; align-items: center; margin: 5px 0 1px; height: 25px; }
        .search .input { width: 157px; height: 24px; border: 1px solid #888; box-sizing: border-box; background: #fff; color: #8a8a8a; line-height: 22px; padding-left: 3px; }
        .search svg { margin-left: 4px; }
        .box { flex: 1; min-height: 0; display: flex; border: 1px solid #9b9b9b; background: #fff; margin-bottom: 2px; overflow: hidden; }
        .list { flex: 1; min-width: 0; overflow: hidden; }
        .row { position: relative; height: 16px; display: flex; align-items: center; line-height: 16px; white-space: nowrap; }
        .tw { width: 12px; flex: none; background: #fff; position: relative; }
        .l0 { padding-left: 5px; }
        .l0 .tw { margin-right: 5px; }
        .l0 .lb { margin-left: 5px; }
        .l1 { padding-left: 24px; }
        .l1 .tw { margin-right: 4px; }
        .l1 .lb { margin-left: 6px; }
        .l1::before, .l2::before { content: ""; position: absolute; left: 30px; top: 0; bottom: 0; border-left: 1px dotted #888; }
        .l1::after { content: ""; position: absolute; left: 36px; top: 8px; width: 4px; border-top: 1px dotted #888; }
        .l2 { padding-left: 58px; }
        .l2::after { content: ""; position: absolute; left: 49px; top: 0; width: 9px; height: 8px; border-left: 1px dotted #888; border-bottom: 1px dotted #888; }
        .wrap { display: flex; align-items: center; height: 16px; padding: 0 3px 0 2px; }
        .wrap .lb { margin-left: 6px; }
        .wrap.on { background: #316ac5; color: #fff; }
      </style>
      <div class="search">
        <div class="input">搜索构件...</div>
        <svg width="18" height="18" viewBox="0 0 18 18"><circle cx="10" cy="7" r="5" fill="#fff" stroke="#4a90d8" stroke-width="2"/><path d="M6.500 11l-4 4" stroke="#4a90d8" stroke-width="2.500"/></svg>
      </div>
      <div class="box">
        <div class="list">
          <div class="row l0"><span class="tw">${CHEV_OPEN}</span>${icon('footing')}<span class="lb">独立基础</span></div>
          ${rows}
        </div>
        <gl-scrollbar top="1" size="300"></gl-scrollbar>
      </div>`;
  }
}

class GlPropEditor extends HTMLElement {
  constructor() {
    super();
    this.attachShadow({ mode: 'open' });
    this.shadowRoot.innerHTML = `
      <style>
        :host { display: block; background: #fff; margin-bottom: 2px; border-right: 1px solid #ccc; min-height: 0; overflow: hidden; }
        .tabs { height: 20px; border-bottom: 1px solid #ccc; display: flex; box-sizing: content-box; }
        .tab { width: 62px; text-align: center; line-height: 20px; background: #fff; border: 1px solid #ccc; border-bottom: 0; box-sizing: border-box; height: 21px; }
        gl-grid { margin: 4px 0 0 5px; }
      </style>
      <div class="tabs"><div class="tab">属性编辑</div></div>
      <gl-grid set="props" cols="22,190,126,32"></gl-grid>`;
  }
}

class GlGrid extends HTMLElement {
  connectedCallback() {
    if (this.shadowRoot) return;
    this.attachShadow({ mode: 'open' });
    const data = GRIDS[this.getAttribute('set')];
    const cols = this.getAttribute('cols').split(',').map(n => n + 'px').join(' ');
    const head = data.head.map((t, i) => `<div class="h${i === 2 ? ' val' : ''}">${t}</div>`).join('');
    const rows = data.rows.map((r, i) => {
      const sel = i === data.selected;
      const [name, value, extra, style] = r;
      const tone = style === 'gray' ? ' gray' : style === 'link' ? ' link' : '';
      const valText = /[^\x20-\x7e]/.test(value) ? value : mix(value);
      const isParam = data.head.length === 3;
      let html = `<div class="c n${sel ? ' nsel' : ''}">${i + 1}</div>`;
      html += `<div class="c name${sel ? ' sel' : ''}${tone}${isParam ? '' : ' ind'}">${mix(name)}</div>`;
      html += `<div class="c v${sel ? ' vsel' : ''}${style === 'gray' ? ' gray' : ''}${/^\d+$/.test(value) ? ' num' : ''}">${/^\d+$/.test(value) ? value : valText}</div>`;
      if (!isParam) html += `<div class="c chk">${extra === 'box' ? '<i></i>' : ''}</div>`;
      return html;
    }).join('');
    this.shadowRoot.innerHTML = `
      <style>
        ${MIX_CSS}
        :host { display: block; }
        .g { display: grid; grid-template-columns: ${cols}; grid-auto-rows: 19px; grid-template-rows: 23px; border-top: 1px solid #bbb; border-left: 1px solid #bbb; width: max-content; }
        .h { background: linear-gradient(#fff, #ebebeb); border-right: 1px solid #bbb; border-bottom: 1px solid #bbb; display: flex; align-items: center; justify-content: center; line-height: 16px; white-space: nowrap; overflow: hidden; }
        .h.val { background: linear-gradient(#fbdca3, #f2c268); color: #5c0f70; }
        .c { border-right: 1px solid #bbb; border-bottom: 1px solid #bbb; background: #fff; display: flex; align-items: center; padding-left: 3px; box-sizing: border-box; line-height: 16px; white-space: nowrap; overflow: hidden; }
        .n { justify-content: center; padding: 0; background: linear-gradient(#fff, #ececec); font: 10px "DejaVu Sans Mono", monospace; }
        .nsel { background: #fdd28a; color: #5c0f70; }
        .ind { padding-left: 20px; }
        .sel { background: #0078d7; color: #fff; }
        .vsel { background: #d8e8f7; }
        .gray { color: #8a8a8a; }
        .link { color: #0000f0; }
        .num { font: 11.5px "Liberation Sans", sans-serif; }
        .chk { justify-content: center; padding: 0; }
        .chk i { display: block; width: 11px; height: 11px; border: 1px solid #444; }
      </style>
      <div class="g">${head}${rows}</div>`;
  }
}

class GlStatusbar extends HTMLElement {
  constructor() {
    super();
    this.attachShadow({ mode: 'open' });
    this.shadowRoot.innerHTML = `
      <style>
        ${MIX_CSS}
        :host { display: flex; gap: 3px; background: #f0f0f0; padding-left: 1px; white-space: nowrap; line-height: 18px; }
        .c { flex: none; border: 1px solid #dcdcdc; box-sizing: border-box; height: 20px; padding-left: 1px; overflow: hidden; }
      </style>
      <div class="c" style="width:147px"></div>
      <div class="c" style="width:77px">${mix('层高:3.55m')}</div>
      <div class="c" style="width:1062px">${mix('底标高:-3.58m')}</div>
      <div class="c" style="width:69px">${mix('450.1 FPS')}</div>`;
  }
}

const TASK_ICONS = [
  [48, `<path d="M8 6h8v12H8zM6 8H3v8h3M18 8h3v8h-3" fill="none" stroke="#fff" stroke-width="1.300"/>`],
  [50, `<circle cx="12" cy="12" r="1.500" fill="#ddd"/><path d="M12 12C5 12 2 9 3 5c2-3 9-3 9 7zM12 12c0-7 3-10 7-9 3 2 3 9-7 9zM12 12c7 0 10 3 9 7-2 3-9 3-9-7zM12 12c0 7-3 10-7 9-3-2-3-9 7-9z" fill="#e8e8e8"/>`],
  [50, `<path d="M14 8a8 8 0 1 0 5 8c0-5-7-8-11-3-1 4 4 5 6 2" fill="none" stroke="#ddd" stroke-width="1.300"/><path d="M14 9c0-4 1-7 3.500-7S21 5 21 9l1.500 2.500h-10z" fill="#e8a020"/>`],
  [49, `<path d="M3 13c0-7 5-10 10-10 5 0 8 4 8 9H8c0 4 6 6 12 3v5c-8 3-17 1-17-7z" fill="#0a6fd0"/>`],
  [49, `<path d="M4 7h16v14H4z" fill="#fff"/><path d="M8 7c0-6 8-6 8 0" fill="none" stroke="#fff" stroke-width="1.400"/><rect x="7" y="9.500" width="4.500" height="4.500" fill="#f25022"/><rect x="12.500" y="9.500" width="4.500" height="4.500" fill="#7fba00"/><rect x="7" y="15" width="4.500" height="4.500" fill="#00a4ef"/><rect x="12.500" y="15" width="4.500" height="4.500" fill="#ffb900"/>`],
  [49, `<path d="M2 4h8l2 2h10v15H2z" fill="#f3d675"/><path d="M2 9h20v12H2z" fill="#fbe7a4"/><path d="M8 21v-5h8v5z" fill="#2f9fe0"/><path d="M6 16l6-5 6 5z" fill="#3cb4ea"/>`],
  [48, `<ellipse cx="12" cy="12" rx="10" ry="4.500" transform="rotate(-35 12 12)" fill="none" stroke="#f2c14a" stroke-width="1.500"/><path d="M5 13c0-5 3-8 7-8 4 0 7 3 7 7H9c0 4 5 5 9 2v3c-6 3-13 2-13-4z" fill="#3aa0ec"/>`],
  [47, `<rect x="2" y="2" width="20" height="20" rx="4" fill="#0d9bf0"/><path d="M6 9v4c0 3 4 3 5 0M18 9v4c0 3-4 3-5 0M12 5v14" fill="none" stroke="#fff" stroke-width="1.800"/>`],
  [47, `<rect x="3" y="2" width="19" height="21" rx="2" fill="#f39c12"/><rect x="6" y="5" width="13" height="15" fill="#fde6b0"/><path d="M8 9h9M8 12h9M8 15h6" stroke="#c47a10"/><path d="M12 18L21 4" stroke="#d8451d" stroke-width="2"/>`],
  [47, `<path d="M18 3C9 2 3 8 4 15s9 8 12 5 3-8-2-9c-3 0-4 3-2 4-4-1-2-6 2-6 3 0 7 1 7 1-3-1-3-4-3-7z" fill="#1484dc"/>`],
  [46, `<circle cx="12" cy="12" r="10" fill="#e9f5e0"/><circle cx="12" cy="12" r="8" fill="#64b82f"/><path d="M7 11h10c0-6-10-6-10 1 0 5 6 6 9 3" fill="none" stroke="#fff" stroke-width="1.800"/><path d="M15 2c3 0 5 1 6 4" fill="none" stroke="#3c8a20" stroke-width="1.500"/>`],
  [48, `<rect x="5" y="9" width="11" height="14" fill="#ddd"/><path d="M7 12h7M7 15h7M7 18h7M7 21h7" stroke="#555"/>`],
];

class GlTaskbar extends HTMLElement {
  constructor() {
    super();
    this.attachShadow({ mode: 'open' });
    const underlined = [7, 8, 9, 10, 11];
    const apps = TASK_ICONS.map(([w, svg], i) => {
      const extra = i === 11 ? `<b class="qm">?</b>` : '';
      return `<div class="app${i === 7 ? ' on' : ''}${underlined.includes(i) ? ' line' : ''}" style="width:${w}px"><svg width="24" height="24" viewBox="0 0 24 24">${svg}</svg>${extra}</div>`;
    }).join('');
    this.shadowRoot.innerHTML = `
      <style>
        :host { display: flex; position: relative; z-index: 5; height: 40px; background: rgba(5, 10, 15, .85); color: #fff; white-space: nowrap; }
        .start { flex: none; width: 48px; background: #000; display: flex; align-items: center; justify-content: center; }
        .search { flex: none; width: 344px; background: #333; display: flex; align-items: center; color: #8e8e8e; font-size: 13px; }
        .search .ring { margin: 0 6px 0 10px; }
        .search span { flex: 1; }
        .search .mic { margin-right: 12px; }
        .app { flex: none; height: 40px; display: flex; align-items: center; justify-content: center; position: relative; box-sizing: border-box; }
        .app.on { background: rgba(255, 255, 255, .24); }
        .app.line::after { content: ""; position: absolute; left: 0; right: 4px; bottom: 0; height: 2px; background: #76b9ed; }
        .app.on.line::after { right: 0; }
        .qm { position: absolute; left: 23px; top: 3px; color: #f2dc17; font: 700 18px "Liberation Sans", sans-serif; line-height: 20px; }
        .cpu { flex: none; width: 85px; text-align: center; line-height: 19px; font-size: 12px; }
        .tray { flex: 1; display: flex; align-items: center; }
        .clock { width: 68px; text-align: center; line-height: 19px; font-size: 13px; margin-left: 11px; }
        .note { position: relative; margin-left: 14px; }
        .badge { position: absolute; left: 8px; top: 9px; width: 18px; height: 18px; border-radius: 50%; background: #333; border: 1px solid #ddd; box-sizing: border-box; font: 700 11px/16px "Liberation Sans", sans-serif; text-align: center; color: #fff; }
        .tray svg { flex: none; display: block; }
      </style>
      <div class="start"><svg width="16" height="16" viewBox="0 0 16 16"><path d="M0 2.300l6.500-.9V7.500H0zM7.400 1.300L16 0v7.500H7.400zM0 8.400h6.500v6.200L0 13.700zM7.400 8.400H16V16l-8.600-1.200z" fill="#fff"/></svg></div>
      <div class="search">
        <svg class="ring" width="20" height="20" viewBox="0 0 20 20"><circle cx="10" cy="10" r="8" fill="none" stroke="#e0e0e0" stroke-width="2.200"/></svg>
        <span>在这里输入你要搜索的内容</span>
        <svg class="mic" width="12" height="18" viewBox="0 0 12 18"><rect x="3.500" y="1" width="5" height="10" rx="2.500" fill="none" stroke="#8e8e8e"/><path d="M1 7v2a5 5 0 0 0 10 0V7M6 14v3M3 17h6" fill="none" stroke="#8e8e8e"/></svg>
      </div>
      ${apps}
      <div class="cpu"><div>6%</div><div>CPU使用</div></div>
      <div class="tray">
        <svg width="12" height="8" viewBox="0 0 12 8" style="margin-left:7px"><path d="M1 7l5-5 5 5" fill="none" stroke="#fff" stroke-width="1.200"/></svg>
        <svg width="16" height="16" viewBox="0 0 16 16" style="margin-left:8px"><rect x="2" y="5" width="10" height="7" fill="#fff"/><path d="M13 7v3M4 5V2M9 5V2" stroke="#fff" stroke-width="1.200"/></svg>
        <svg width="16" height="16" viewBox="0 0 16 16" style="margin-left:9px"><path d="M1 14a13 13 0 0 1 13-13M4 14a10 10 0 0 1 10-10M7 14a7 7 0 0 1 7-7M10 14a4 4 0 0 1 4-4" fill="none" stroke="#ddd"/></svg>
        <svg width="16" height="16" viewBox="0 0 16 16" style="margin-left:5px"><path d="M2 6h3l4-4v12l-4-4H2z" fill="none" stroke="#fff"/><path d="M11 5c1 2 1 4 0 6M13 3c2 3 2 7 0 10" fill="none" stroke="#ddd"/></svg>
        <svg width="22" height="14" viewBox="0 0 22 14" style="margin-left:11px"><rect x=".5" y=".5" width="21" height="13" rx="1" fill="none" stroke="#fff"/><path d="M3 4h16M3 7h16" stroke="#fff" stroke-dasharray="1.500 1"/><path d="M6 10.500h10" stroke="#fff"/></svg>
        <span style="margin-left:9px;font-size:14px">英</span>
        <svg width="16" height="18" viewBox="0 0 16 18" style="margin-left:15px"><path d="M2 3l12-2 1.500 13-12 3z" fill="#e8432a"/><path d="M11 5.500C7 4.500 5.500 7 8 8.500s2.500 4-2 3.500" fill="none" stroke="#fff" stroke-width="1.800"/></svg>
        <div class="clock"><div>16:04</div><div>2017/11/21</div></div>
        <div class="note">
          <svg width="16" height="18" viewBox="0 0 16 18"><path d="M0 1h15v14H0z" fill="#fff"/><path d="M2 4h11M2 7h11M2 10h8" stroke="#111"/></svg>
          <div class="badge">20</div>
        </div>
      </div>`;
  }
}

class GlDialog extends HTMLElement {
  constructor() {
    super();
    this.attachShadow({ mode: 'open' });
    this.shadowRoot.innerHTML = `
      <style>
        :host { position: absolute; left: 314px; top: 242px; width: 745px; height: 540px; z-index: 2; background: #f0f0f0; border: 1px solid #2a8ae6; box-sizing: border-box; box-shadow: 2px 2px 8px rgba(0, 0, 0, .25); display: flex; flex-direction: column; }
        .bar { flex: none; height: 25px; box-sizing: border-box; padding: 0 8px 3px 3px; background: #fff; display: flex; align-items: center; justify-content: space-between; line-height: 16px; }
        .main { flex: 1; min-height: 0; display: flex; }
        .group { position: relative; flex: none; width: 481px; margin: 15px 0 0 9px; border: 1px solid #dcdcdc; box-sizing: border-box; padding: 10px 0 0 4px; }
        .legend { position: absolute; left: 6px; top: -8px; background: #f0f0f0; line-height: 14px; padding: 0 1px; }
        .grid { display: grid; grid-template-columns: repeat(3, 154px); grid-auto-rows: 158px; gap: 4px; }
        .side { flex: 1; min-width: 0; display: flex; flex-direction: column; padding-left: 23px; }
        .frame { flex: none; width: 216px; height: 267px; margin-top: 8px; border: 1px solid #b5b5b5; box-sizing: border-box; background: #fff; padding: 1px; }
        .big { position: relative; margin: 12px 0 0 -7px; border-top: 1px solid #dcdcdc; padding: 11px 0 0 7px; }
        .big .legend { left: 6px; }
      </style>
      <div class="bar"><span>选择参数化图形</span>
        <svg width="12" height="12" viewBox="0 0 12 12"><path d="M1 1l10 10M11 1L1 11" stroke="#333"/></svg>
      </div>
      <div class="main">
        <div class="group"><span class="legend">图形</span><div class="grid"><slot></slot></div></div>
        <div class="side">
          <div class="frame"><slot name="props"></slot></div>
          <div class="big"><span class="legend">大图预览</span><slot name="preview"></slot></div>
        </div>
      </div>`;
  }
}

class GlThumb extends HTMLElement {
  connectedCallback() {
    if (this.shadowRoot) return;
    this.attachShadow({ mode: 'open' });
    const shape = SHAPES[this.getAttribute('shape')];
    const size = +(this.getAttribute('size') || 140);
    const bare = this.hasAttribute('bare');
    this.shadowRoot.innerHTML = `
      <style>
        :host { display: block; box-sizing: border-box; ${bare ? '' : `padding: 8px 0 0 6px; background: ${this.hasAttribute('selected') ? '#00ffff' : '#f0f0f0'}; border: 1px solid; border-color: #fff #a0a0a0 #a0a0a0 #fff;`} }
        svg { display: block; background: #7192a9; }
      </style>
      <svg width="${size}" height="${size}" viewBox="${shape.o[0]} ${shape.o[1]} 420 420">${shape.s}</svg>`;
  }
}

class GlParamView extends HTMLElement {
  constructor() {
    super();
    this.attachShadow({ mode: 'open' });
    let hatch = '';
    for (let x = 1205; x < 1380; x += 33) hatch += `<line x1="${x}" y1="470" x2="${x}" y2="690" stroke="#e00000" stroke-width="9"/>`;
    for (let y = 484; y < 690; y += 31) hatch += `<line x1="1195" y1="${y}" x2="1380" y2="${y}" stroke="#e00000" stroke-width="9"/>`;
    const edge = '1200,684 1372,684 1372,475 1310,490 1240,580 1205,650';
    this.shadowRoot.innerHTML = `
      <style>
        :host { position: absolute; left: 1075px; top: 419px; width: 270px; height: 283px; z-index: 1; box-sizing: border-box; border: 1px solid #555; background: linear-gradient(#b6c8da, #dce7f1 15%, #dce7f1); }
        .t { height: 30px; line-height: 36px; padding-left: 8px; color: #9aa0a6; }
        svg { display: block; margin-left: 8px; background: #000; border: 1px solid #fff; box-sizing: content-box; }
      </style>
      <div class="t">参数图</div>
      <svg width="252" height="243" viewBox="757 152 723 728" preserveAspectRatio="none">
        <defs><clipPath id="cut"><polygon points="${edge}"/></clipPath></defs>
        <g fill="none" stroke="#fff" stroke-width="3">
          <rect x="931" y="190" width="449" height="501"/>
          <rect x="1020" y="290" width="274" height="296"/>
          <rect x="1107" y="385" width="115" height="102"/>
        </g>
        <g clip-path="url(#cut)">${hatch}</g>
        <g fill="none" stroke="#fff" stroke-width="3">
          <path d="M1308 420v118h64M1242 580v105M1210 548l34 36"/>
          <path d="M1372 472l-62 18-70 90-35 70-5 34" stroke-dasharray="12 6"/>
          <path d="M868 190h50M868 691h50M893 190v501M932 700v55M1380 700v55M932 730h448"/>
        </g>
        <polygon points="893,192 886,218 900,218" fill="#fff"/><polygon points="893,688 886,662 900,662" fill="#fff"/>
        <polygon points="934,730 960,723 960,737" fill="#fff"/><polygon points="1378,730 1352,723 1352,737" fill="#fff"/>
        <rect x="1115" y="712" width="78" height="30" fill="#000"/><rect x="870" y="405" width="36" height="78" fill="#000"/>
        <g fill="#fff" font-family="Liberation Sans" font-size="30" text-anchor="middle">
          <text x="1155" y="738">3200</text><text x="1155" y="772">b</text>
          <text transform="translate(897 444) rotate(-90)">3200</text><text transform="translate(872 444) rotate(-90)">a</text>
        </g>
        <g fill="#fff" font-family="Noto Sans CJK SC">
          <text x="1230" y="408" font-size="31">纵向受力筋</text>
          <text x="1065" y="547" font-size="31">横向受力筋</text>
          <text x="992" y="826" font-size="52">独立基础三台</text>
        </g>
        <rect x="982" y="835" width="336" height="11" fill="#fff"/>
      </svg>`;
  }
}

class GlEllipse extends HTMLElement {
  constructor() {
    super();
    this.attachShadow({ mode: 'open' });
    this.shadowRoot.innerHTML = `
      <style>
        :host { position: absolute; z-index: 3; pointer-events: none; }
        svg { display: block; width: 100%; height: 100%; overflow: visible; }
      </style>
      <svg viewBox="0 0 100 100" preserveAspectRatio="none"><ellipse cx="50" cy="50" rx="49" ry="48" fill="none" stroke="#f00000" stroke-width="3" vector-effect="non-scaling-stroke"/></svg>`;
  }
}

class GlNetWidget extends HTMLElement {
  constructor() {
    super();
    this.attachShadow({ mode: 'open' });
    this.shadowRoot.innerHTML = `
      <style>
        :host { position: absolute; left: 749px; top: 5px; width: 126px; height: 48px; z-index: 6; font: 11px "Liberation Sans", sans-serif; color: #222; }
        .pill { position: absolute; left: 26px; top: 5px; width: 100px; height: 40px; border-radius: 20px; background: linear-gradient(#f8f8f8, #d4d4d4); box-shadow: 0 1px 3px rgba(0, 0, 0, .5); }
        .ball { position: absolute; left: 0; top: 0; width: 47px; height: 47px; border-radius: 50%; border: 2px solid #e8e8e8; box-sizing: border-box; background: linear-gradient(#1c6b4a 0, #1c6b4a 24%, #3fbf57 40%, #45cc5c); box-shadow: 0 1px 3px rgba(0, 0, 0, .6); color: #fff; font: 15px "Liberation Sans", sans-serif; text-align: center; line-height: 45px; }
        .rate { position: absolute; left: 78px; line-height: 12px; }
        .plus { position: absolute; left: 98px; top: 14px; width: 22px; height: 22px; border-radius: 50%; background: #3a7fd5; box-shadow: inset 0 0 0 2px #b9cbe0; }
        .plus svg { display: block; }
        .dot { position: absolute; left: 112px; top: 13px; width: 9px; height: 9px; border-radius: 50%; background: #d8242a; }
        .arrow { position: absolute; left: 50px; }
      </style>
      <div class="pill"></div>
      <div class="ball">70%</div>
      <svg class="arrow" style="top:12px" width="9" height="10" viewBox="0 0 9 10"><path d="M4.500 0L8 5H5.500v5h-2V5H1z" fill="#d0463a"/></svg>
      <svg class="arrow" style="top:28px" width="9" height="10" viewBox="0 0 9 10"><path d="M4.500 10L8 5H5.500V0h-2v5H1z" fill="#3a9a3a"/></svg>
      <div class="rate" style="top:11px">0K/s</div>
      <div class="rate" style="top:27px">0K/s</div>
      <div class="plus"><svg width="22" height="22" viewBox="0 0 22 22"><path d="M11 6v10M6 11h10" stroke="#fff" stroke-width="2"/></svg></div>
      <div class="dot"></div>`;
  }
}

class GlImeBar extends HTMLElement {
  constructor() {
    super();
    this.attachShadow({ mode: 'open' });
    this.shadowRoot.innerHTML = `
      <style>
        :host { position: absolute; left: 868px; top: 3px; height: 26px; z-index: 7; display: flex; align-items: flex-start; }
        .s { flex: none; margin-right: -6px; position: relative; z-index: 1; }
        .bar { display: flex; align-items: center; gap: 7px; height: 24px; width: 162px; box-sizing: border-box; background: #fff; border: 1px solid #c5d3e2; padding-left: 10px; color: #1c66b8; line-height: 20px; }
        .bar b { font-size: 14px; font-weight: 700; width: 14px; }
        svg { display: block; flex: none; }
      </style>
      <svg class="s" width="28" height="26" viewBox="0 0 29 34" preserveAspectRatio="none"><path d="M3 6l22-5 3 25-22 7z" fill="#ee3e1e"/><path d="M21 10c-7-3-12 1-8 5s8 5 1 9c-2 1-5 0-7-1" fill="none" stroke="#fff" stroke-width="4"/></svg>
      <div class="bar">
        <b>英</b>
        <svg width="14" height="14" viewBox="0 0 14 14"><circle cx="3" cy="4" r="1.600" fill="#1c66b8"/><path d="M10 3c1.500 2 1.500 5-1 8" fill="none" stroke="#1c66b8" stroke-width="1.600"/></svg>
        <svg width="12" height="20" viewBox="0 0 12 20" style="margin-left:3px"><rect x="3" y="1" width="6" height="12" rx="3" fill="#1c66b8"/><path d="M1 8v2a5 5 0 0 0 10 0V8M6 15v3M3 18.500h6" fill="none" stroke="#1c66b8" stroke-width="1.300"/></svg>
        <svg width="16" height="14" viewBox="0 0 16 14" style="margin-left:3px"><rect x=".5" y=".5" width="15" height="13" rx="1.500" fill="#1c66b8"/><path d="M3 4.500h10M3 7.500h10" stroke="#fff" stroke-dasharray="1.500 1"/><path d="M5 10.500h6" stroke="#fff"/></svg>
        <svg width="15" height="17" viewBox="0 0 15 17" style="margin-left:1px"><circle cx="6" cy="5" r="3.500" fill="#9fb1c6"/><path d="M0 16c0-5 3-6 6-6s5 1 5 3v3z" fill="#9fb1c6"/><rect x="8" y="9" width="7" height="7" fill="#fff" stroke="#9fb1c6"/></svg>
        <svg width="16" height="16" viewBox="0 0 16 16"><path d="M5 1H1L0 6l3 1v8h10V7l3-1-1-5h-4c-.5 2-3.500 2-4 0z" fill="#1c66b8"/></svg>
        <svg width="14" height="16" viewBox="0 0 14 16"><path d="M13 2c-2-2-5-1-6 1-.500 1-.500 2 0 3L1 12c-1 1 0 3 2 2l6-6c2 .500 4-.500 5-3l-3 1-1-2z" fill="#1c66b8"/></svg>
      </div>`;
  }
}

customElements.define('gl-app', GlApp);
customElements.define('gl-titlebar', GlTitlebar);
customElements.define('gl-menubar', GlMenubar);
customElements.define('gl-toolbar', GlToolbar);
customElements.define('gl-workspace', GlWorkspace);
customElements.define('gl-scrollbar', GlScrollbar);
customElements.define('gl-nav', GlNav);
customElements.define('gl-comptree', GlCompTree);
customElements.define('gl-propeditor', GlPropEditor);
customElements.define('gl-grid', GlGrid);
customElements.define('gl-statusbar', GlStatusbar);
customElements.define('gl-taskbar', GlTaskbar);
customElements.define('gl-dialog', GlDialog);
customElements.define('gl-thumb', GlThumb);
customElements.define('gl-paramview', GlParamView);
customElements.define('gl-ellipse', GlEllipse);
customElements.define('gl-netwidget', GlNetWidget);
customElements.define('gl-imebar', GlImeBar);
</script>
</body>
</html>
